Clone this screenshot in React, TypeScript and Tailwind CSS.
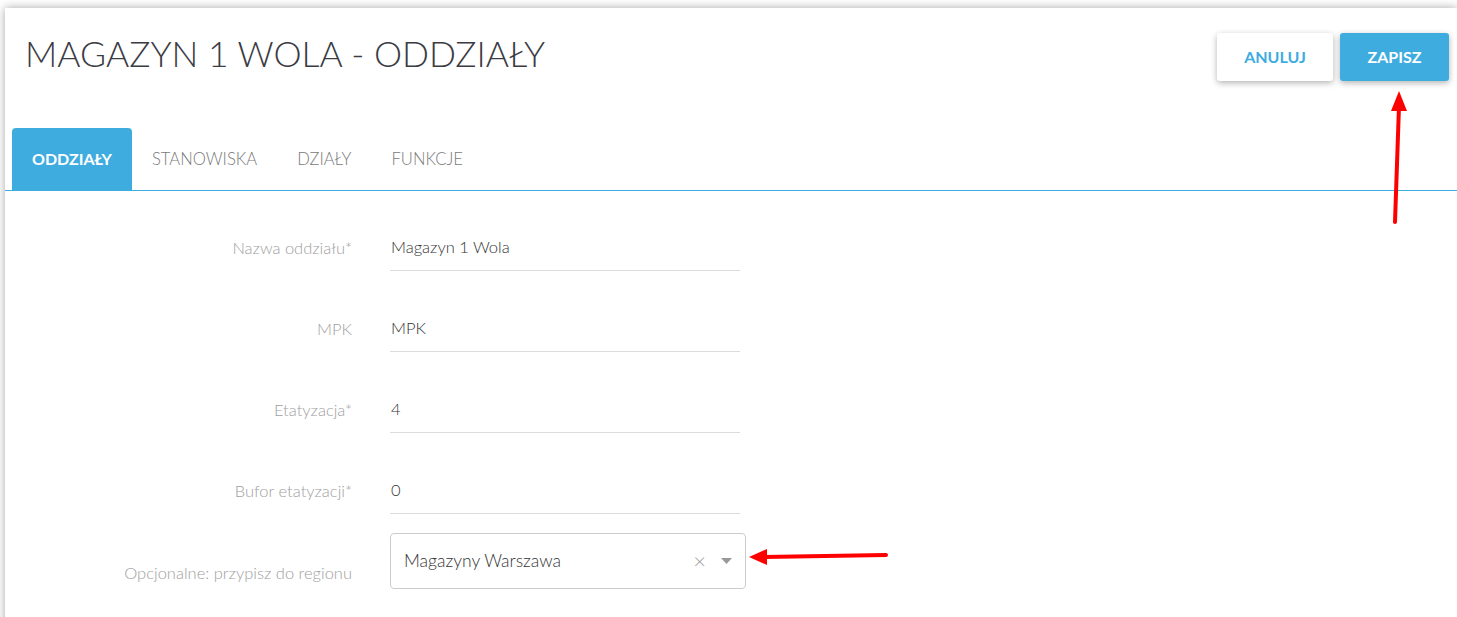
import React from 'react';

const font = { fontFamily: 'Lato, "Open Sans", sans-serif' };

const fields = [
  { label: 'Nazwa oddziału*', value: 'Magazyn 1 Wola' },
  { label: 'MPK', value: 'MPK' },
  { label: 'Etatyzacja*', value: '4' },
  { label: 'Bufor etatyzacji*', value: '0' },
];

const tabs = ['ODDZIAŁY', 'STANOWISKA', 'DZIAŁY', 'FUNKCJE'];

export default function App() {
  return (
    <div className="relative h-[617px] w-[1457px] overflow-hidden bg-white pl-[5px] pt-[8px]" style={font}>
      <div className="h-[620px] bg-white shadow-[0_0_9px_rgba(0,0,0,0.35)]">
        {/* Header */}
        <div className="flex h-[120px] items-start justify-between pl-5 pr-[8px]">
          <h1 className="mt-[28px] text-[35.5px] font-light leading-[35px] text-[#3b3b44]">
            MAGAZYN 1 WOLA - ODDZIAŁY
          </h1>
          <div className="mt-[25px] flex gap-[7px]">
            <button className="h-12 w-[116px] rounded-[3px] bg-white text-[16px] font-bold text-[#3eacdf] shadow-[0_2px_6px_rgba(0,0,0,0.3)]">
              ANULUJ
            </button>
            <button className="h-12 w-[109px] rounded-[3px] bg-[#3eacdf] text-[16px] font-bold text-white shadow-[0_2px_6px_rgba(0,0,0,0.3)]">
              ZAPISZ
            </button>
          </div>
        </div>
        {/* Tabs */}
        <div className="flex border-b border-[#3eacdf] px-[7px]">
          {tabs.map((t, i) => (
            <div
              key={t}
              className={`flex h-[62px] items-center rounded-t-[4px] px-5 ${i === 0 ? 'bg-[#3eacdf] text-[16px] font-bold text-white' : 'text-[16.6px] font-light text-[#7a7a7a]'}`}
            >
              {t}
            </div>
          ))}
        </div>
        {/* Form */}
        <div className="pt-[34px]">
          {fields.map(f => (
            <div key={f.label} className="mb-[35px] flex items-center gap-[38px]">
              <div className="w-[347px] text-right text-[16.5px] font-light text-[#a0a0a0]">{f.label}</div>
              <div className="flex h-[46px] w-[350px] items-center border-b border-[#dcdcdc] pl-px text-[16.5px] font-light text-[#333]">
                {f.value}
              </div>
            </div>
          ))}
          <div className="-mt-[16px] flex items-start gap-[38px]">
            <div className="mt-[28px] w-[347px] text-right text-[16.5px] font-light text-[#a0a0a0]">
              Opcjonalne: przypisz do regionu
            </div>
            <div className="flex h-14 w-[356px] items-center rounded-[4px] border border-[#cccccc] pl-[13px] pr-[13px] text-[17.5px] font-light text-[#333]">
              <span className="flex-1">Magazyny Warszawa</span>
              <span className="mr-[15px] text-[22px] leading-none text-[#999]">×</span>
              <svg width="11" height="6" viewBox="0 0 11 6">
                <path d="M0 0h11L5.5 6z" fill="#999" />
              </svg>
            </div>
          </div>
        </div>
      </div>
      {/* Annotation arrows */}
      <svg className="pointer-events-none absolute left-0 top-0" width="1457" height="617">
        <line x1="1395" y1="222" x2="1399" y2="106" stroke="#ff0000" strokeWidth="4" strokeLinecap="round" />
        <path d="M1399 91 L1407 111 L1391 111 Z" fill="#ff0000" />
        <line x1="886" y1="555" x2="764" y2="557" stroke="#ff0000" strokeWidth="4" strokeLinecap="round" />
        <path d="M749 557 L767 549 L767 565 Z" fill="#ff0000" />
      </svg>
    </div>
  );
}
